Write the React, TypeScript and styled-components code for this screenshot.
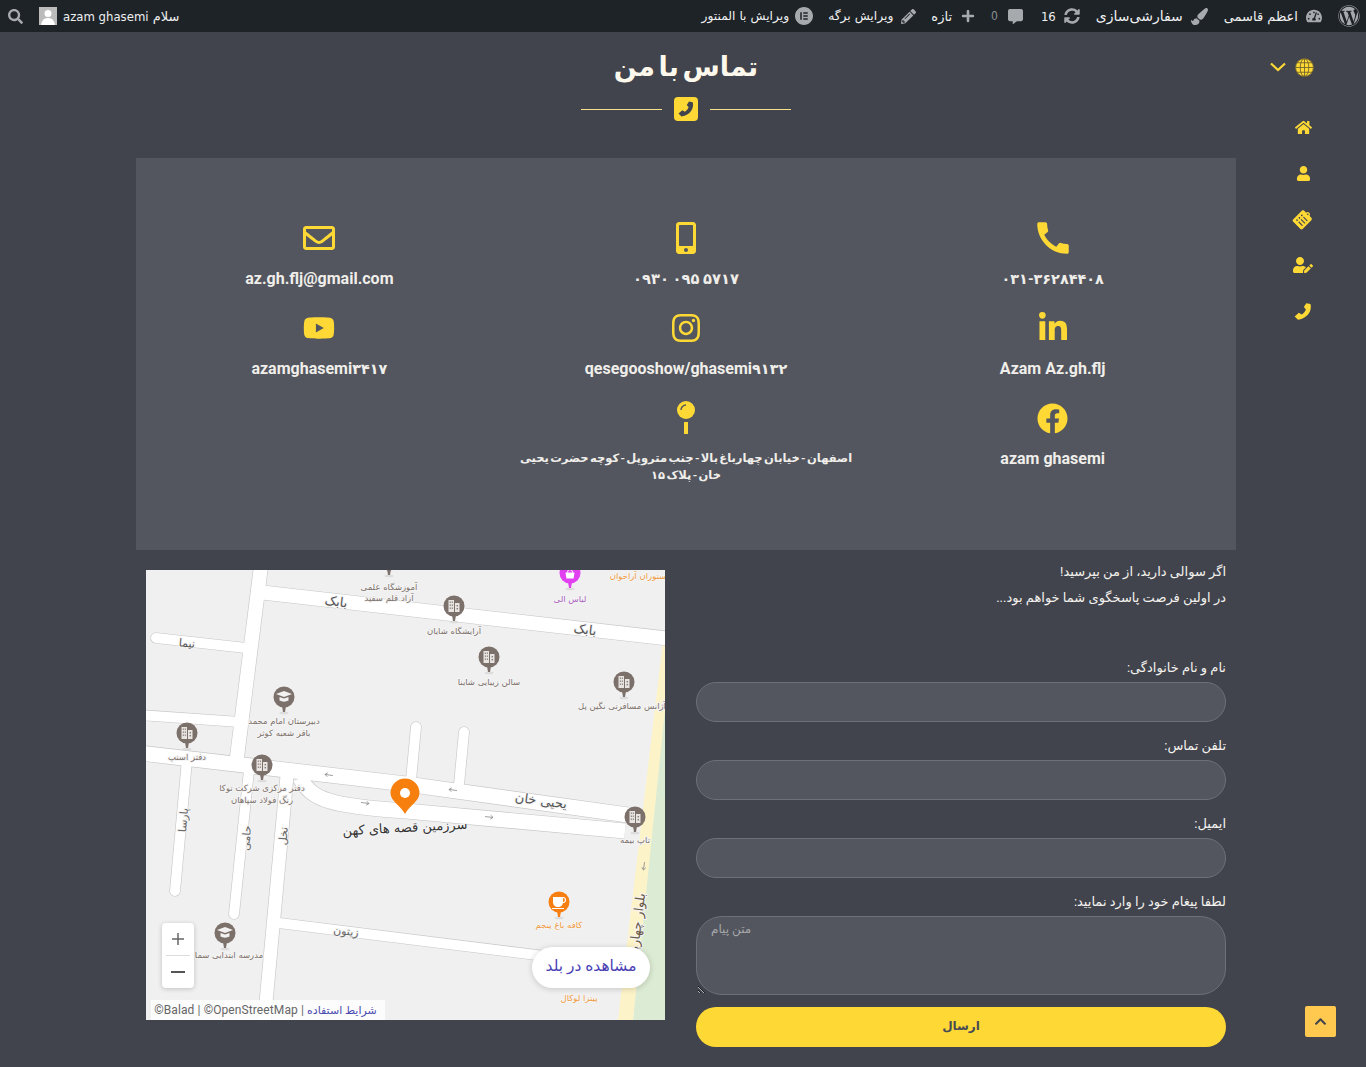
import React from "react";
import styled, { createGlobalStyle } from "styled-components";
import { FaWordpress, FaFacebook, FaInstagram, FaLinkedinIn, FaYoutube, FaRegEnvelope, FaMobileAlt, FaHome, FaUser, FaUserEdit, FaClipboardList, FaTachometerAlt, FaPaintBrush, FaSyncAlt, FaCommentAlt, FaPlus, FaPencilAlt, FaSearch, FaChevronUp } from "react-icons/fa";
import { MdCall } from "react-icons/md";
import { SiElementor } from "react-icons/si";

const Y = "#fed936";
const SANS = `Roboto, "DejaVu Sans", sans-serif`;

const Global = createGlobalStyle`
  html, body { margin: 0; padding: 0; background: #41444d; }
  body { font-family: ${SANS}; overflow: hidden; }
  * { box-sizing: border-box; }
`;

const Page = styled.div`
  direction: rtl;
  width: 1366px;
  height: 1067px;
  background: #41444d;
  position: relative;
  overflow: hidden;
`;

const AdminBar = styled.div`
  height: 32px;
  background: #1d2327;
  display: flex;
  justify-content: space-between;
  align-items: center;
  color: #f0f0f1;
  font-family: "DejaVu Sans", sans-serif;
  font-size: 13px;
`;
const BarGroup = styled.div`
  display: flex;
  align-items: center;
  height: 100%;
`;
const BarItem = styled.div<{ $gap?: number; $pad?: number; $end?: number }>`
  display: flex;
  align-items: center;
  gap: ${(p) => p.$gap ?? 7}px;
  padding-inline-start: ${(p) => p.$pad ?? 0}px;
  padding-inline-end: ${(p) => p.$end ?? 0}px;
  white-space: nowrap;
  svg { color: #a7aaad; flex: none; }
`;
const BarLabel = styled.span<{ $s: number }>`
  font-size: ${(p) => p.$s}px;
`;
const Muted = styled.span`
  color: #8c8f94;
  font-family: "DejaVu Sans Condensed", "DejaVu Sans", sans-serif;
  font-size: 12px;
`;
const Narrow = styled.span`
  font-family: "DejaVu Sans Condensed", "DejaVu Sans", sans-serif;
`;
const Avatar = styled.svg`
  width: 18px;
  height: 18px;
  display: block;
`;

const Body = styled.div`
  display: grid;
  grid-template-columns: 130px 1100px 136px;
`;

const Side = styled.aside`
  padding: 24px 52px 0 0;
  color: ${Y};
`;
const GlobeRow = styled.div`
  display: flex;
  align-items: center;
  gap: 9px;
  height: 22px;
`;
const SideList = styled.div`
  margin-top: 39px;
  display: flex;
  flex-direction: column;
  gap: 26px;
  padding-inline-start: 1px;
  align-items: flex-start;
`;
const SideIcon = styled.span<{ $t?: string }>`
  width: 20px;
  height: 20px;
  display: flex;
  align-items: center;
  justify-content: center;
  transform: ${(p) => p.$t ?? "none"};
`;

const Main = styled.main`
  min-width: 0;
`;
const Header = styled.header`
  height: 126px;
  display: flex;
  flex-direction: column;
  align-items: center;
  padding-top: 13px;
`;
const Title = styled.h1`
  margin: 0;
  font-size: 27px;
  word-spacing: -3px;
  line-height: 44px;
  font-weight: 700;
  color: #fdf8ec;
`;
const Ornament = styled.div`
  margin-top: 8px;
  display: flex;
  align-items: center;
  gap: 12px;
`;
const OrnLine = styled.span`
  width: 81px;
  height: 1px;
  background: #f6e28a;
`;
const OrnBox = styled.span`
  width: 24px;
  height: 24px;
  border-radius: 4px;
  background: ${Y};
  color: #41444d;
  display: flex;
  align-items: center;
  justify-content: center;
`;

const Panel = styled.section`
  background: #53565e;
  height: 392px;
  padding-top: 60px;
  display: grid;
  grid-template-columns: repeat(3, 1fr);
  grid-auto-rows: 90px;
`;
const Cell = styled.div`
  display: flex;
  flex-direction: column;
  align-items: center;
  color: ${Y};
  padding: 0 18px;
`;
const CellIcon = styled.div`
  height: 40px;
  display: flex;
  align-items: center;
  justify-content: center;
`;
const CellText = styled.div<{ $ltr?: boolean }>`
  direction: ${(p) => (p.$ltr ? "ltr" : "rtl")};
  margin-top: 10px;
  color: #f0eeea;
  text-align: center;
  font-size: 16px;
  font-weight: 700;
  line-height: 21px;
`;
const Digits = styled.span<{ $s?: number }>`
  font-size: ${(p) => p.$s ?? 14.4}px;
`;
const AddressText = styled.div`
  margin: 12px -6px 0;
  color: #f0eeea;
  text-align: center;
  font-size: 11.5px;
  font-weight: 700;
  line-height: 17px;
  word-spacing: -1.5px;
`;

const Lower = styled.section`
  display: grid;
  grid-template-columns: 530px 519px;
  gap: 31px;
  padding: 0 10px;
`;
const Form = styled.form`
  padding-top: 9px;
  color: #f4f2ee;
`;
const Intro = styled.p`
  margin: 0 0 46px;
  font-size: 13px;
  line-height: 26px;
`;
const Label = styled.label`
  display: block;
  font-size: 13px;
  line-height: 22px;
  margin-bottom: 3px;
`;
const Input = styled.input`
  display: block;
  width: 100%;
  height: 40px;
  margin-bottom: 13px;
  border-radius: 20px;
  border: 1px solid #6d7077;
  background: #53565e;
  outline: none;
`;
const Area = styled.textarea`
  display: block;
  width: 100%;
  height: 79px;
  margin-bottom: 12px;
  padding: 5px 14px;
  border-radius: 26px;
  border: 1px solid #6d7077;
  background: #53565e;
  outline: none;
  text-align: left;
  font-family: ${SANS};
  font-size: 12px;
  &::placeholder { color: #a5a7aa; }
`;
const Send = styled.button`
  display: block;
  width: 100%;
  height: 40px;
  padding: 0 0 2px;
  border: 0;
  border-radius: 20px;
  background: ${Y};
  color: #494b52;
  font-family: ${SANS};
  font-size: 12px;
  font-weight: 700;
`;

const MapBox = styled.div`
  margin-top: 20px;
  width: 519px;
  height: 450px;
  position: relative;
  overflow: hidden;
  background: #f0f0f0;
`;
const MapSvg = styled.svg`
  display: block;
  width: 519px;
  height: 450px;
`;
const Zoom = styled.div`
  position: absolute;
  left: 16px;
  top: 353px;
  width: 32px;
  height: 65px;
  background: #fff;
  border-radius: 4px;
  box-shadow: 0 1px 5px rgba(0, 0, 0, 0.2);
  display: flex;
  flex-direction: column;
  align-items: center;
  color: #666;
`;
const ZoomBtn = styled.div`
  flex: 1;
  width: 100%;
  display: flex;
  align-items: center;
  justify-content: center;
`;
const ZoomSep = styled.div`
  width: 24px;
  height: 1px;
  background: #ddd;
`;
const OpenBtn = styled.div`
  position: absolute;
  left: 386px;
  top: 377px;
  width: 118px;
  height: 41px;
  padding-bottom: 3px;
  border-radius: 21px;
  background: #fff;
  box-shadow: 0 1px 6px rgba(0, 0, 0, 0.18);
  color: #4a3fb5;
  font-size: 15.5px;
  display: flex;
  align-items: center;
  justify-content: center;
  white-space: nowrap;
`;
const Attribution = styled.div`
  position: absolute;
  left: 5px;
  top: 430px;
  width: 234px;
  height: 20px;
  padding-right: 5px;
  background: rgba(255, 255, 255, 0.8);
  color: #666;
  font-size: 12px;
  letter-spacing: 0.1px;
  line-height: 20px;
  text-align: center;
  white-space: nowrap;
  direction: ltr;
`;
const AttrLink = styled.span`
  color: #4a4ab0;
  font-size: 11px;
  letter-spacing: 0;
  direction: rtl;
`;

const ToTop = styled.div`
  position: absolute;
  left: 1305px;
  top: 1006px;
  width: 31px;
  height: 31px;
  background: #ffc94f;
  border-radius: 2px;
  color: #41444d;
  display: flex;
  align-items: center;
  justify-content: center;
`;

const MapText = styled.text<{ $c?: string; $s?: number; $w?: number }>`
  font-family: "DejaVu Sans", sans-serif;
  font-size: ${(p) => p.$s ?? 8.5}px;
  font-weight: ${(p) => p.$w ?? 400};
  fill: ${(p) => p.$c ?? "#7d716b"};
  text-anchor: middle;
  direction: rtl;
  stroke: #f4f4f4;
  stroke-width: 2px;
  paint-order: stroke;
`;

const road = (d: string, w: number, cap: "round" | "butt" = "butt") => ({ d, w, cap });
const roads = [
  road("M258 592L672 639", 14),
  road("M261 566L236 765", 14),
  road("M288 765L264 1024", 13),
  road("M156 638L246 648", 10, "round"),
  road("M140 715L240 722", 10),
  road("M187 760L175 891", 10, "round"),
  road("M249 770L234 914", 10, "round"),
  road("M140 753L406 784L628 815", 15),
  road("M300 778C312 800 330 806 406 811L625 831", 15),
  road("M416 727L411 780", 10, "round"),
  road("M464 732L459 785", 10, "round"),
  road("M279 923L625 966", 10),
];

type Kind = "b" | "g" | "c" | "s";
const Marker = ({ x, y, k = "b", c = "#7c706b" }: { x: number; y: number; k?: Kind; c?: string }) => (
  <g transform={`translate(${x} ${y})`}>
    <ellipse cx="0" cy="16" rx="4.5" ry="1.3" fill="#dcdcdc" />
    <path d="M-2 9H2L1 15H-1Z" fill={c} />
    <circle r="10.5" fill={c} />
    {k === "b" && (
      <g>
        <rect x="-5.5" y="-6" width="5.5" height="12" fill="#e8e4e2" />
        <rect x="1" y="-3" width="4.5" height="9" fill="#e8e4e2" />
        <g fill="#7c706b">
          <rect x="-4.2" y="-4.5" width="1" height="1.4" />
          <rect x="-2.2" y="-4.5" width="1" height="1.4" />
          <rect x="-4.2" y="-1.5" width="1" height="1.4" />
          <rect x="-2.2" y="-1.5" width="1" height="1.4" />
          <rect x="-4.2" y="1.5" width="1" height="1.4" />
          <rect x="-2.2" y="1.5" width="1" height="1.4" />
          <rect x="2.6" y="-1" width="1.3" height="1.4" />
          <rect x="2.6" y="2" width="1.3" height="1.4" />
        </g>
      </g>
    )}
    {k === "g" && (
      <g fill="#f2f2f2">
        <path d="M-8 -3L0 -6L8 -3L0 0Z" />
        <path d="M-4.5 0V3.5C-2 5 2 5 4.5 3.5V0L0 1.6Z" />
      </g>
    )}
    {k === "c" && (
      <g fill="#fff">
        <path d="M-6 -5H4V0C4 3 2 5 -1 5C-4 5 -6 3 -6 0Z" />
        <path d="M4 -4.5A2.5 2.5 0 0 1 4 0.5" stroke="#fff" strokeWidth="1.2" fill="none" />
        <rect x="-7" y="6" width="12" height="1" />
      </g>
    )}
    {k === "s" && (
      <g>
        <path d="M-4.5 -0.5H4.5L3.6 5.5H-3.6Z" fill="#fff" />
        <path d="M-2.5 -0.5A2.5 3 0 0 1 2.5 -0.5" stroke="#fff" strokeWidth="1" fill="none" />
      </g>
    )}
  </g>
);

const Arrow = ({ x, y, r = 0 }: { x: number; y: number; r?: number }) => (
  <path transform={`translate(${x} ${y}) rotate(${r})`} d="M-4 0H4M-4 0L-1.5 -2M-4 0L-1.5 2" stroke="#8c8c8c" strokeWidth="0.8" fill="none" />
);

const CityMap = () => (
  <MapSvg viewBox="146 570 519 450">
    <rect x="146" y="570" width="519" height="450" fill="#f0f0f0" />
    <path d="M672 632L665 700L633 1020H665V632Z" fill="#dcebd3" />
    <path d="M664 632L618 1020H633L673 632Z" fill="#fdf3c8" />
    {roads.map((r, i) => (
      <path key={`e${i}`} d={r.d} fill="none" stroke="#c6c6c6" strokeWidth={r.w + 1.2} strokeLinecap={r.cap} />
    ))}
    {roads.map((r, i) => (
      <path key={`r${i}`} d={r.d} fill="none" stroke="#fff" strokeWidth={r.w} strokeLinecap={r.cap} />
    ))}
    <Arrow x={329} y={775} r={8} />
    <Arrow x={453} y={790} r={8} />
    <Arrow x={365} y={803} r={188} />
    <Arrow x={489} y={817} r={186} />
    <Arrow x={644} y={866} r={278} />

    <MapText x={336} y={606} $s={13} $c="#555" transform="rotate(7 336 602)">بابک</MapText>
    <MapText x={585} y={634} $s={13} $c="#555" transform="rotate(7 585 630)">بابک</MapText>
    <MapText x={187} y={647} $s={11} $c="#555" transform="rotate(6 187 643)">نیما</MapText>
    <MapText x={541} y={805} $s={13} $c="#555" transform="rotate(8 541 801)">یحیی خان</MapText>
    <MapText x={183} y={824} $s={11} $c="#666" transform="rotate(-85 183 820)">پارسا</MapText>
    <MapText x={246} y={842} $s={11} $c="#666" transform="rotate(-85 246 838)">حامی</MapText>
    <MapText x={283} y={840} $s={11} $c="#666" transform="rotate(-85 283 836)">نخل</MapText>
    <MapText x={346} y={935} $s={11} $c="#666" transform="rotate(6 346 931)">زیتون</MapText>
    <MapText x={637} y={931} $s={13} $c="#6b5a45" transform="rotate(-83 637 927)">بلوار چهارباغ</MapText>

    <Marker x={389} y={560} />
    <MapText x={389} y={590}>آموزشگاه علمی</MapText>
    <MapText x={389} y={601}>آزاد قلم سفید</MapText>
    <Marker x={454} y={606} />
    <MapText x={454} y={634}>آرایشگاه شایان</MapText>
    <Marker x={489} y={657} />
    <MapText x={489} y={685}>سالن زیبایی شاینا</MapText>
    <Marker x={624} y={682} />
    <MapText x={622} y={709}>آژانس مسافرتی نگین پل</MapText>
    <Marker x={284} y={697} k="g" />
    <MapText x={284} y={724}>دبیرستان امام محمد</MapText>
    <MapText x={284} y={736}>باقر شعبه کوثر</MapText>
    <Marker x={187} y={733} />
    <MapText x={187} y={760}>دفتر اسنپ</MapText>
    <Marker x={262} y={765} />
    <MapText x={262} y={791}>دفتر مرکزی شرکت توکا</MapText>
    <MapText x={262} y={803}>رنگ فولاد سپاهان</MapText>
    <Marker x={635} y={817} />
    <MapText x={635} y={843}>تاپ بیمه</MapText>
    <Marker x={559} y={902} k="c" c="#f77f12" />
    <MapText x={559} y={928} $c="#f09a3e">کافه باغ پنجم</MapText>
    <MapText x={579} y={1001} $c="#f09a3e">پیتزا لوکال</MapText>
    <Marker x={570} y={573} k="s" c="#e040f0" />
    <MapText x={570} y={602} $c="#a860c0">لباس الی</MapText>
    <MapText x={640} y={579} $c="#f09a3e">رستوران آراخوان</MapText>
    <Marker x={225} y={933} k="g" />
    <MapText x={229} y={958}>مدرسه ابتدایی سما</MapText>

    <g transform="translate(405 793)">
      <path d="M-14.5 0A14.5 14.5 0 1 1 14.5 0C14.5 8 5 12 0 21C-5 12 -14.5 8 -14.5 0Z" fill="#f77f0e" />
      <circle r="5" fill="#fff" />
    </g>
    <MapText x={405} y={832} $s={13} $c="#333" transform="rotate(-3 405 828)">سرزمین قصه های کهن</MapText>
  </MapSvg>
);

const Globe = () => (
  <svg width="19" height="19" viewBox="0 0 20 20" fill="none">
    <circle cx="10" cy="10" r="9.5" fill={Y} />
    <g stroke="#6b5f2a" strokeWidth="0.9">
      <circle cx="10" cy="10" r="9.4" />
      <ellipse cx="10" cy="10" rx="4.5" ry="9.4" />
      <path d="M10 .5V19.5M.5 10H19.5M2 5H18M2 15H18" />
    </g>
  </svg>
);
const Chevron = () => (
  <svg width="16" height="10" viewBox="0 0 16 10" fill="none">
    <path d="M1 1.5L8 8L15 1.5" stroke={Y} strokeWidth="2.2" />
  </svg>
);
const Pin = () => (
  <svg width="20" height="34" viewBox="0 0 20 34">
    <circle cx="10" cy="9" r="9" fill={Y} />
    <path d="M5 9A5 5 0 0 1 10 4" stroke="#53565e" strokeWidth="1.4" fill="none" />
    <rect x="8" y="21" width="4" height="12" fill={Y} />
  </svg>
);
const Handset = ({ size }: { size: number }) => (
  <svg width={size} height={size} viewBox="0 0 24 24" fill="currentColor">
    <path d="M16 2L21 3C23 11 18 20 6 22L2 18L7 13.5L10.5 15.5C13 14 14.5 12 15.5 9.5L13 6.5Z" />
  </svg>
);

const App = () => (
  <Page>
    <Global />
    <AdminBar>
      <BarGroup>
        <BarItem $pad={6}><FaWordpress size={22} /></BarItem>
        <BarItem $pad={16} $gap={8}><FaTachometerAlt size={16} />اعظم قاسمی</BarItem>
        <BarItem $pad={16} $gap={8}><FaPaintBrush size={17} /><BarLabel $s={14}>سفارشی‌سازی</BarLabel></BarItem>
        <BarItem $pad={16} $gap={8}><FaSyncAlt size={16} /><Narrow>16</Narrow></BarItem>
        <BarItem $pad={18} $gap={10}><FaCommentAlt size={15} /><Muted>0</Muted></BarItem>
        <BarItem $pad={16} $gap={9}><FaPlus size={14} />تازه</BarItem>
        <BarItem $pad={15} $gap={8}><FaPencilAlt size={15} /><BarLabel $s={12.3}>ویرایش برگه</BarLabel></BarItem>
        <BarItem $pad={15} $gap={6}><SiElementor size={18} /><BarLabel $s={12.3}>ویرایش با المنتور</BarLabel></BarItem>
      </BarGroup>
      <BarGroup>
        <BarItem $gap={6} $end={16}>
          <span>سلام <Narrow>azam ghasemi</Narrow></span>
          <Avatar viewBox="0 0 18 18">
            <rect width="18" height="18" fill="#bbb" />
            <circle cx="9" cy="6.5" r="3.5" fill="#fff" />
            <path d="M2 18C3 12 6 11 9 11C12 11 15 12 16 18Z" fill="#fff" />
          </Avatar>
        </BarItem>
        <BarItem $end={8}><FaSearch size={15} /></BarItem>
      </BarGroup>
    </AdminBar>
    <Body>
      <Side>
        <GlobeRow><Globe /><Chevron /></GlobeRow>
        <SideList>
          <SideIcon><FaHome size={17} /></SideIcon>
          <SideIcon><FaUser size={15} /></SideIcon>
          <SideIcon $t="rotate(45deg)"><FaClipboardList size={18} /></SideIcon>
          <SideIcon><FaUserEdit size={20} /></SideIcon>
          <SideIcon><Handset size={21} /></SideIcon>
        </SideList>
      </Side>
      <Main>
        <Header>
          <Title>تماس با من</Title>
          <Ornament>
            <OrnLine />
            <OrnBox><Handset size={18} /></OrnBox>
            <OrnLine />
          </Ornament>
        </Header>
        <Panel>
          <Cell><CellIcon><MdCall size={42} /></CellIcon><CellText $ltr><Digits>۰۳۱-۳۶۲۸۴۴۰۸</Digits></CellText></Cell>
          <Cell><CellIcon><FaMobileAlt size={32} /></CellIcon><CellText $ltr><Digits $s={14.7}>۰۹۳۰ ۰۹۵ ۵۷۱۷</Digits></CellText></Cell>
          <Cell><CellIcon><FaRegEnvelope size={32} /></CellIcon><CellText>az.gh.flj@gmail.com</CellText></Cell>
          <Cell><CellIcon><FaLinkedinIn size={32} /></CellIcon><CellText $ltr>Azam Az.gh.flj</CellText></Cell>
          <Cell><CellIcon><FaInstagram size={32} /></CellIcon><CellText $ltr>qesegooshow/ghasemi<Digits>۹۱۳۲</Digits></CellText></Cell>
          <Cell><CellIcon><FaYoutube size={32} /></CellIcon><CellText $ltr>azamghasemi<Digits>۳۴۱۷</Digits></CellText></Cell>
          <Cell><CellIcon><FaFacebook size={31} /></CellIcon><CellText $ltr>azam ghasemi</CellText></Cell>
          <Cell><CellIcon><Pin /></CellIcon><AddressText>اصفهان - خیابان چهارباغ بالا - جنب متروپل - کوچه حضرت یحیی خان - پلاک ۱۵</AddressText></Cell>
        </Panel>
        <Lower>
          <Form>
            <Intro>اگر سوالی دارید، از من بپرسید!<br />در اولین فرصت پاسخگوی شما خواهم بود...</Intro>
            <Label>نام و نام خانوادگی:</Label>
            <Input />
            <Label>تلفن تماس:</Label>
            <Input />
            <Label>ایمیل:</Label>
            <Input />
            <Label>لطفا پیغام خود را وارد نمایید:</Label>
            <Area placeholder="متن پیام" />
            <Send type="button">ارسال</Send>
          </Form>
          <MapBox>
            <CityMap />
            <Zoom>
              <ZoomBtn>
                <svg width="14" height="14" viewBox="0 0 14 14"><path d="M7 1V13M1 7H13" stroke="#666" strokeWidth="1.5" /></svg>
              </ZoomBtn>
              <ZoomSep />
              <ZoomBtn>
                <svg width="14" height="14" viewBox="0 0 14 14"><path d="M0 7H14" stroke="#555" strokeWidth="2" /></svg>
              </ZoomBtn>
            </Zoom>
            <OpenBtn>مشاهده در بلد</OpenBtn>
            <Attribution>©Balad | ©OpenStreetMap | <AttrLink>شرایط استفاده</AttrLink></Attribution>
          </MapBox>
        </Lower>
      </Main>
      <div />
    </Body>
    <ToTop><FaChevronUp size={13} /></ToTop>
  </Page>
);

export default App;
